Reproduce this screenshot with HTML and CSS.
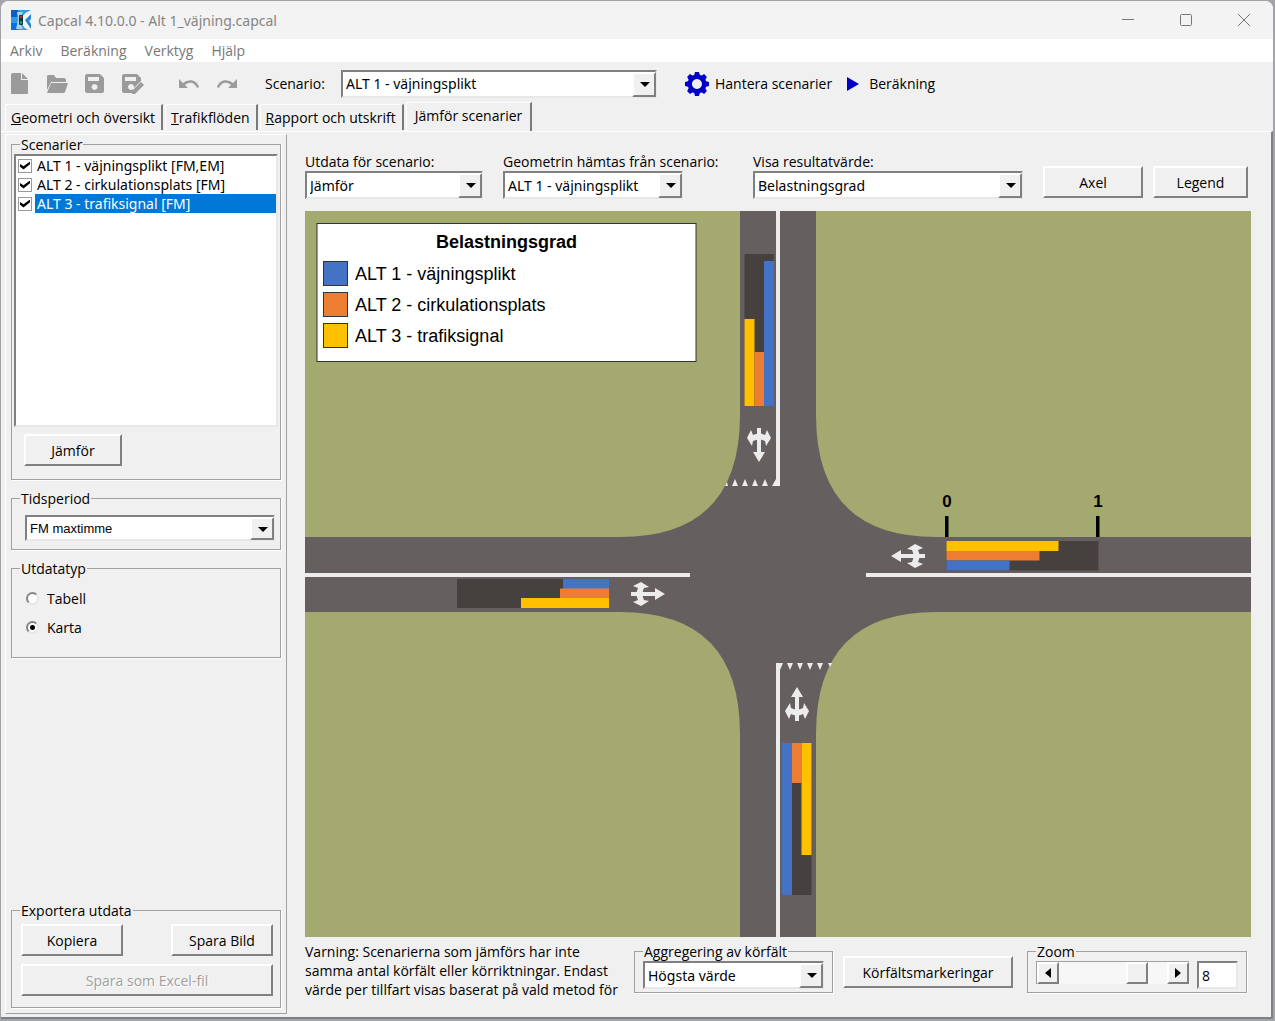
FILE: index.html
```html
<!DOCTYPE html>
<html lang="sv">
<head>
  <meta charset="UTF-8">
  <meta name="viewport" content="width=device-width, initial-scale=1.0">
  <title>Capcal 4.10.0.0 - Alt 1_väjning.capcal</title>
  <link rel="stylesheet" href="styles.css">
</head>
<body>
  <div class="window">
    <header class="titlebar">
      <svg class="app-icon" width="20" height="20" viewBox="0 0 20 20">
        <rect width="20" height="20" fill="#2f9be0"/>
        <rect width="7" height="7" fill="#0b5fc4"/>
        <rect y="13" width="7" height="7" fill="#0a6fe0"/>
        <path d="M6 2h6l-4 8 4 9H5l2-9z" fill="#9fd4f5"/>
        <path d="M20 0v20h-3c-6-3-6-6-6-10s2-7 9-10z" fill="#e9f4fb"/>
        <path d="M14 10l6-6v5l-2 2 2 3v5z" fill="#2b86cc"/>
        <rect x="8" y="5" width="4" height="10" rx="1" fill="#16323c"/>
        <circle cx="10" cy="7" r="1.2" fill="#c8382e"/>
        <circle cx="10" cy="12.5" r="1.2" fill="#2fae4a"/>
      </svg>
      <span class="title">Capcal 4.10.0.0 - Alt 1_väjning.capcal</span>
      <div class="window-buttons">
        <button type="button" aria-label="Minimera">
          <svg width="14" height="14" viewBox="0 0 14 14"><path d="M1 6.5h12"/></svg>
        </button>
        <button type="button" aria-label="Maximera">
          <svg width="14" height="14" viewBox="0 0 14 14"><rect x="1.5" y="1.5" width="11" height="11" rx="1"/></svg>
        </button>
        <button type="button" aria-label="Stäng">
          <svg width="14" height="14" viewBox="0 0 14 14"><path d="M1 1l12 12M13 1L1 13"/></svg>
        </button>
      </div>
    </header>

    <nav class="menubar">
      <a href="#">Arkiv</a>
      <a href="#">Beräkning</a>
      <a href="#">Verktyg</a>
      <a href="#">Hjälp</a>
    </nav>

    <div class="toolbar">
      <div class="tool-icons">
        <button type="button" aria-label="Ny">
          <svg width="24" height="24" viewBox="0 0 24 24"><path d="M6 1h8v7h7v13q0 1-1 1H5q-1 0-1-1V3q0-2 2-2z"/><path d="M15 1l6 6h-6z"/></svg>
        </button>
        <button type="button" aria-label="Öppna">
          <svg width="24" height="24" viewBox="0 0 24 24"><path d="M3 3h6l2 3h8q2 0 2 2v2H6l-4 8V5q0-2 1-2z"/><path d="M6 11h17l-3 9q0 1-2 1H2z"/></svg>
        </button>
        <button type="button" aria-label="Spara">
          <svg width="24" height="24" viewBox="0 0 24 24"><path fill-rule="evenodd" d="M4 2h13l4 4v13q0 2-2 2H4q-2 0-2-2V4q0-2 2-2zM5 5v4h11V5zM11.5 12a3 3 0 1 0 .1 0z"/></svg>
        </button>
        <button type="button" aria-label="Spara som">
          <svg width="24" height="24" viewBox="0 0 24 24"><path fill-rule="evenodd" d="M3 2h13l4 4v3l-8 8v4H3q-2 0-2-2V4q0-2 2-2zM4 5v4h11V5zM10 12a3 3 0 1 0 .1 0z"/><path d="M20 10l3 3-9 9h-3v-3z"/></svg>
        </button>
      </div>
      <div class="tool-icons undo-icons">
        <button type="button" aria-label="Ångra">
          <svg width="24" height="24" viewBox="0 0 24 24"><path d="M2 7v9h9l-3-3c5-4 10-2 12 3l2-1C20 8 12 6 6 11z"/></svg>
        </button>
        <button type="button" aria-label="Gör om">
          <svg width="24" height="24" viewBox="0 0 24 24"><path d="M22 7v9h-9l3-3c-5-4-10-2-12 3l-2-1C4 8 12 6 18 11z"/></svg>
        </button>
      </div>
      <label class="scenario-label" for="scenario">Scenario:</label>
      <span class="combo combo-scenario">
        <select id="scenario">
          <option>ALT 1 - väjningsplikt</option>
          <option>ALT 2 - cirkulationsplats</option>
          <option>ALT 3 - trafiksignal</option>
        </select>
      </span>
      <button type="button" class="tool-link">
        <svg width="24" height="24" viewBox="-12 -12 24 24" fill="#0000c8">
          <g id="teeth">
            <path d="M-3-8l1-4h4l1 4zM-3 8l1 4h4l1-4z"/>
            <path d="M-8-3l-4 1v4l4 1zM8-3l4 1v4l-4 1z"/>
          </g>
          <use href="#teeth" transform="rotate(45)"/>
          <path fill-rule="evenodd" d="M0-9.5a9.5 9.5 0 1 0 .1 0zM0-5a5 5 0 1 1-.1 0z"/>
        </svg>
        Hantera scenarier
      </button>
      <button type="button" class="tool-link run-link">
        <svg width="12" height="16" viewBox="0 0 12 16" fill="#0000c8"><path d="M0 1l12 7-12 7z"/></svg>
        Beräkning
      </button>
    </div>

    <div class="tabs" role="tablist">
      <button type="button" role="tab" class="tab"><u>G</u>eometri och översikt</button>
      <button type="button" role="tab" class="tab"><u>T</u>rafikflöden</button>
      <button type="button" role="tab" class="tab"><u>R</u>apport och utskrift</button>
      <button type="button" role="tab" class="tab active" aria-selected="true"><u>J</u>ämför scenarier</button>
    </div>

    <div class="page">
      <aside class="sidebar">
        <fieldset class="group">
          <legend>Scenarier</legend>
          <div class="checklist">
            <label><input type="checkbox" checked><span>ALT 1 - väjningsplikt [FM,EM]</span></label>
            <label><input type="checkbox" checked><span>ALT 2 - cirkulationsplats [FM]</span></label>
            <label class="selected"><input type="checkbox" checked><span>ALT 3 - trafiksignal [FM]</span></label>
          </div>
          <button type="button" class="btn btn-compare">Jämför</button>
        </fieldset>

        <fieldset class="group">
          <legend>Tidsperiod</legend>
          <span class="combo combo-small">
            <select aria-label="Tidsperiod">
              <option>FM maxtimme</option>
              <option>EM maxtimme</option>
            </select>
          </span>
        </fieldset>

        <fieldset class="group">
          <legend>Utdatatyp</legend>
          <div class="radio-list">
            <label><input type="radio" name="type">Tabell</label>
            <label><input type="radio" name="type" checked>Karta</label>
          </div>
        </fieldset>

        <fieldset class="group group-export">
          <legend>Exportera utdata</legend>
          <div class="export-buttons">
            <button type="button" class="btn">Kopiera</button>
            <button type="button" class="btn">Spara Bild</button>
            <button type="button" class="btn btn-wide" disabled>Spara som Excel-fil</button>
          </div>
        </fieldset>
      </aside>

      <main class="content">
        <div class="filters">
          <div class="field">
            <label for="output">Utdata för scenario:</label>
            <span class="combo">
              <select id="output"><option>Jämför</option></select>
            </span>
          </div>
          <div class="field">
            <label for="geometry">Geometrin hämtas från scenario:</label>
            <span class="combo combo-geometry">
              <select id="geometry"><option>ALT 1 - väjningsplikt</option></select>
            </span>
          </div>
          <div class="field">
            <label for="result">Visa resultatvärde:</label>
            <span class="combo">
              <select id="result"><option>Belastningsgrad</option></select>
            </span>
          </div>
          <div class="filter-buttons">
            <button type="button" class="btn btn-axis">Axel</button>
            <button type="button" class="btn btn-legend">Legend</button>
          </div>
        </div>

        <svg class="map" viewBox="305 211 946 726" preserveAspectRatio="xMidYMid slice">
          <defs>
            <g id="arrow" fill="#ececec">
              <path d="M0-17L6-7H2V17H-2V-7H-6z"/>
              <path d="M-12 7l5-8 1 5q6 3 12 0l1-5 5 8-4 8-2-5q-6 3-12 0l-2 5z"/>
            </g>
          </defs>

          <!-- vägar -->
          <rect x="305" y="211" width="946" height="726" fill="#a4a96f"/>
          <path fill="#665f5f" d="M740 211H816V415Q816 537 936 537H1251V612H936Q816 612 816 734V937H740V734Q740 612 620 612H305V537H620Q740 537 740 415z"/>

          <!-- mittlinjer och väjningslinjer -->
          <g fill="#ececec">
            <rect x="776" y="211" width="4" height="275"/>
            <rect x="776" y="663" width="4" height="274"/>
            <rect x="305" y="573" width="385" height="4"/>
            <rect x="866" y="573" width="385" height="4"/>
            <path d="M725 486l2-4 1 4zM732 486l3-7 3 7zM742 486l3-7 3 7zM752 486l3-7 3 7zM762 486l3-7 3 7zM772 486l4-7v7z"/>
            <path d="M780 663h3l-3 7zM787 663h6l-3 7zM797 663h6l-3 7zM807 663h6l-3 7zM817 663h6l-3 7zM828 663h4l-2 4z"/>
          </g>
          <use href="#arrow" transform="translate(759 445) rotate(180)"/>
          <use href="#arrow" transform="translate(797 704)"/>
          <use href="#arrow" transform="translate(648 594) rotate(90)"/>
          <use href="#arrow" transform="translate(908 556) rotate(-90)"/>

          <!-- norr -->
          <rect x="744.5" y="254" width="29.5" height="152" fill="#46413f"/>
          <rect x="744.5" y="319" width="10" height="87" fill="#ffc000"/>
          <rect x="754.5" y="352" width="9.5" height="54" fill="#ed7d31"/>
          <rect x="764" y="261" width="10" height="145" fill="#4472c4"/>

          <!-- öster -->
          <rect x="946.5" y="541" width="152" height="29.5" fill="#46413f"/>
          <rect x="946.5" y="541" width="112" height="10" fill="#ffc000"/>
          <rect x="946.5" y="551" width="93" height="9.5" fill="#ed7d31"/>
          <rect x="946.5" y="560.5" width="63" height="10" fill="#4472c4"/>
          <rect x="945" y="516" width="3.5" height="21"/>
          <rect x="1096" y="516" width="3.5" height="21"/>
          <text class="axis" x="947" y="507">0</text>
          <text class="axis" x="1098" y="507">1</text>

          <!-- väster -->
          <rect x="457" y="579" width="152" height="29" fill="#46413f"/>
          <rect x="563" y="579" width="46" height="10" fill="#4472c4"/>
          <rect x="560" y="588.5" width="49" height="9.5" fill="#ed7d31"/>
          <rect x="521" y="598" width="88" height="10" fill="#ffc000"/>

          <!-- söder -->
          <rect x="782" y="743" width="29.5" height="152" fill="#46413f"/>
          <rect x="782" y="743" width="10" height="152" fill="#4472c4"/>
          <rect x="792" y="743" width="9.5" height="40" fill="#ed7d31"/>
          <rect x="801.5" y="743" width="10" height="112" fill="#ffc000"/>

          <!-- teckenförklaring -->
          <rect x="317" y="223.5" width="379" height="138" fill="#fff" stroke="#333"/>
          <text class="legend-title" x="506.5" y="248">Belastningsgrad</text>
          <g stroke="#333">
            <rect x="323.5" y="261.5" width="24" height="24" fill="#4472c4"/>
            <rect x="323.5" y="292.5" width="24" height="24" fill="#ed7d31"/>
            <rect x="323.5" y="323.5" width="24" height="24" fill="#ffc000"/>
          </g>
          <text class="legend-item" x="355" y="280">ALT 1 - väjningsplikt</text>
          <text class="legend-item" x="355" y="311">ALT 2 - cirkulationsplats</text>
          <text class="legend-item" x="355" y="342">ALT 3 - trafiksignal</text>
        </svg>

        <div class="bottom">
          <p class="warning">Varning: Scenarierna som jämförs har inte samma antal körfält eller körriktningar. Endast värde per tillfart visas baserat på vald metod för</p>
          <fieldset class="group group-aggregate">
            <legend>Aggregering av körfält</legend>
            <span class="combo">
              <select aria-label="Aggregering av körfält"><option>Högsta värde</option></select>
            </span>
          </fieldset>
          <button type="button" class="btn btn-markings">Körfältsmarkeringar</button>
          <fieldset class="group group-zoom">
            <legend>Zoom</legend>
            <div class="zoom-row">
              <div class="scrollbar">
                <button type="button" aria-label="Zooma ut"><svg width="6" height="10" viewBox="0 0 6 10"><path d="M6 0v10L0 5z"/></svg></button>
                <input type="range" min="1" max="10" value="8" aria-label="Zoom">
                <button type="button" aria-label="Zooma in"><svg width="6" height="10" viewBox="0 0 6 10"><path d="M0 0v10l6-5z"/></svg></button>
              </div>
              <input type="text" class="zoom-value" value="8" aria-label="Zoomnivå">
            </div>
          </fieldset>
        </div>
      </main>
    </div>
  </div>
</body>
</html>
```
FILE: styles.css
```css
* {
  box-sizing: border-box;
}

body {
  margin: 0;
  padding: 1px 2px 2px 1px;
  min-height: 100vh;
  display: flex;
  background-color: #a3a3aa;
  font-family: 'Open Sans', 'Noto Sans', sans-serif;
  font-size: 14px;
  line-height: 19px;
  color: #000;
}

button, input, select {
  font: inherit;
  color: inherit;
  margin: 0;
}

.window {
  flex: 1;
  display: flex;
  flex-direction: column;
  background-color: #f0f0f0;
  border-radius: 8px 8px 0 0;
  overflow: hidden;
}

/* titelrad */
.titlebar {
  display: flex;
  align-items: center;
  height: 38px;
  padding: 0 22px 0 10px;
  background-color: #f3f3f3;
}

.title {
  margin-left: 7px;
  font-family: 'Noto Sans', sans-serif;
  color: #858585;
}

.window-buttons {
  display: flex;
  gap: 44px;
  margin-left: auto;
}

.window-buttons button {
  display: flex;
  padding: 0;
  border: none;
  background: none;
}

.window-buttons svg {
  fill: none;
  stroke: #777;
}

.menubar {
  display: flex;
  gap: 18px;
  height: 23px;
  padding: 2px 9px;
  background-color: #fff;
}

.menubar a {
  color: #777;
  text-decoration: none;
}

/* verktygsrad */
.toolbar {
  display: flex;
  align-items: center;
  height: 40px;
  padding-top: 3px;
  padding-left: 6px;
}

.tool-icons {
  display: flex;
  gap: 14px;
}

.tool-icons button {
  display: flex;
  padding: 0;
  border: none;
  background: none;
}

.tool-icons svg {
  fill: #9b9b9b;
}

.undo-icons {
  margin-left: 32px;
}

.scenario-label {
  width: 76px;
  margin-left: 26px;
}

.tool-link {
  display: flex;
  align-items: center;
  gap: 6px;
  margin-left: 28px;
  padding: 0;
  border: none;
  background: none;
}

.run-link {
  gap: 10px;
  margin-left: 15px;
}

/* listrutor */
.combo {
  position: relative;
  display: block;
  height: 28px;
  font-family: 'Noto Sans', sans-serif;
}

.combo select {
  appearance: none;
  width: 100%;
  height: 100%;
  padding: 0 24px 0 3px;
  border: 2px solid;
  border-color: #808080 #e8e8e8 #e8e8e8 #808080;
  border-radius: 0;
  background-color: #fff;
}

.combo::before {
  content: '';
  position: absolute;
  right: 1px;
  top: 2px;
  bottom: 1px;
  width: 20px;
  background-color: #f0f0f0;
  border: 2px solid;
  border-color: #fff #808080 #808080 #fff;
  pointer-events: none;
}

.combo::after {
  content: '';
  position: absolute;
  right: 7px;
  top: 12px;
  border: 5px solid transparent;
  border-top-color: #000;
  border-bottom: none;
  pointer-events: none;
}

.combo-scenario {
  width: 316px;
}

.combo-geometry {
  width: 180px;
}

.combo-small {
  height: 26px;
  margin: 7px 3px 8px 11px;
  font-family: 'Liberation Sans', sans-serif;
  font-size: 13px;
}

/* flikar */
.tabs {
  display: flex;
  align-items: flex-end;
  height: 29px;
  padding-left: 4px;
}

.tab {
  height: 26px;
  margin: 0 2px 1px 0;
  padding: 0 6px 0 5px;
  border: none;
  border-top: 1px solid #fff;
  border-left: 1px solid #fff;
  border-right: 2px solid #7a7a7a;
  background-color: #f0f0f0;
  white-space: nowrap;
}

.tab.active {
  height: 29px;
  margin: 0;
  padding: 0 8px 4px;
}

/* flikens innehåll */
.page {
  flex: 1;
  display: flex;
  padding: 2px 20px 3px 4px;
  border: solid;
  border-width: 1px 2px 2px 0;
  border-color: #fff #808080 #808080 #fff;
}

.sidebar {
  width: 282px;
  display: flex;
  flex-direction: column;
  gap: 9px;
  padding: 0 5px 5px 5px;
  border: 1px solid;
  border-color: #fff #a0a0a0 #a0a0a0 #fff;
}

.group {
  min-width: 0;
  margin: 0;
  padding: 0 2px;
  border: 1px solid #a0a0a0;
  box-shadow: 1px 1px 0 #fff;
}

.group legend {
  margin-left: 6px;
  padding: 0 1px;
}

.checklist {
  min-height: 273px;
  border: 2px solid;
  border-color: #808080 #e8e8e8 #e8e8e8 #808080;
  background-color: #fff;
  font-family: 'Noto Sans', sans-serif;
}

.checklist label {
  display: flex;
  align-items: center;
  gap: 3px;
}

.checklist span {
  flex: 1;
  padding-left: 2px;
}

.checklist .selected span {
  background-color: #0078d7;
  color: #fff;
}

.checklist input {
  appearance: none;
  display: flex;
  width: 14px;
  height: 14px;
  margin-left: 2px;
  border: 1px solid #999;
  background-color: #fff;
}

.checklist input:checked::before {
  content: '';
  width: 10px;
  height: 8px;
  margin: 2px 1px;
  background-color: #000;
  clip-path: polygon(0 30%, 0 65%, 35% 100%, 100% 35%, 100% 0, 35% 60%);
}

.btn {
  height: 32px;
  padding: 0 8px;
  border: 2px solid;
  border-color: #fff #808080 #808080 #fff;
  background-color: #f0f0f0;
  white-space: nowrap;
}

.btn:disabled {
  color: #a0a0a0;
  text-shadow: 1px 1px 0 #fff;
}

.btn-compare {
  display: block;
  width: 98px;
  margin: 7px 0 13px 10px;
}

.radio-list {
  display: flex;
  flex-direction: column;
  gap: 10px;
  padding: 11px 12px 20px;
}

.radio-list label {
  display: flex;
  align-items: center;
  gap: 8px;
}

.radio-list input {
  appearance: none;
  width: 13px;
  height: 13px;
  border: 2px solid;
  border-color: #858585 #e6e6e6 #e6e6e6 #858585;
  border-radius: 50%;
  background-color: #fff;
}

.radio-list input:checked {
  background-image: radial-gradient(circle, #000 2px, #fff 3px);
}

.group-export {
  margin-top: auto;
}

.export-buttons {
  display: grid;
  grid-template-columns: 102px 102px;
  justify-content: space-between;
  gap: 8px;
  padding: 4px 5px 11px 7px;
}

.btn-wide {
  grid-column: span 2;
}

.content {
  flex: 1;
  min-width: 0;
  display: flex;
  flex-direction: column;
  padding: 18px 0 15px 18px;
}

.filters {
  display: grid;
  grid-template-columns: 178px 230px 270px auto;
  gap: 20px;
}

.field label {
  display: block;
  white-space: nowrap;
}

.filter-buttons {
  display: flex;
  gap: 10px;
  padding-top: 14px;
}

.btn-axis {
  width: 100px;
}

.btn-legend {
  width: 95px;
}

.map {
  flex: 1;
  width: 100%;
  min-height: 0;
  margin: 12px 0 5px;
  font-family: 'Liberation Sans', Arial, sans-serif;
}

.legend-title {
  font-size: 18px;
  font-weight: bold;
  text-anchor: middle;
}

.legend-item {
  font-size: 18px;
}

.axis {
  font-size: 17px;
  font-weight: bold;
  text-anchor: middle;
}

/* rad under kartan */
.bottom {
  display: flex;
  align-items: flex-start;
  gap: 10px;
}

.warning {
  flex: 1;
  margin: 0;
}

.group-aggregate {
  width: 199px;
  padding: 0 8px 3px;
}

.group-aggregate legend,
.group-zoom legend {
  margin-left: 0;
}

.btn-markings {
  width: 170px;
  margin-top: 14px;
}

.group-zoom {
  width: 220px;
  margin-left: 4px;
  margin-right: 4px;
  padding: 0 8px 3px;
}

.zoom-row {
  display: flex;
  gap: 8px;
}

.scrollbar {
  flex: 1;
  min-width: 0;
  display: flex;
  height: 23px;
  border-top: 1px solid #a0a0a0;
  border-left: 1px solid #a0a0a0;
  background-color: #f7f7f7;
}

.scrollbar button {
  flex: none;
  width: 22px;
  display: flex;
  align-items: center;
  justify-content: center;
  padding: 0;
  border: 2px solid;
  border-color: #fff #808080 #808080 #fff;
  background-color: #f0f0f0;
}

.scrollbar input {
  appearance: none;
  flex: 1;
  min-width: 0;
  height: 22px;
  background: none;
}

.scrollbar input::-webkit-slider-thumb {
  appearance: none;
  width: 22px;
  height: 22px;
  border: 2px solid;
  border-color: #fff #808080 #808080 #fff;
  background-color: #f0f0f0;
}

.zoom-value {
  width: 41px;
  height: 28px;
  padding: 0 3px;
  border: 2px solid;
  border-color: #808080 #e8e8e8 #e8e8e8 #808080;
  background-color: #fff;
}
```
